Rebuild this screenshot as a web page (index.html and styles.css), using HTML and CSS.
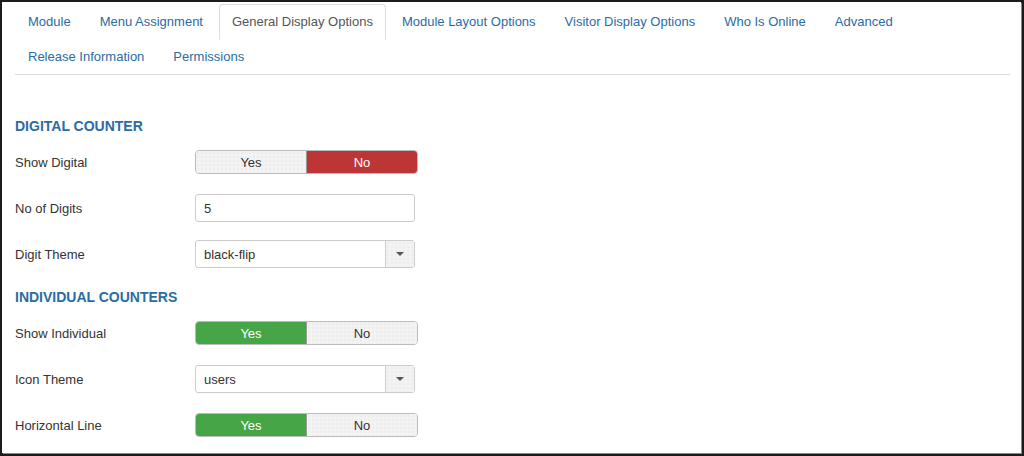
FILE: index.html
```html
<!DOCTYPE html>
<html lang="en">
<head>
  <meta charset="UTF-8">
  <meta name="viewport" content="width=device-width, initial-scale=1.0">
  <title>Module - General Display Options</title>
  <link rel="stylesheet" href="styles.css">
</head>
<body>
  <div class="panel">
    <ul class="nav-tabs">
      <li><a href="#">Module</a></li>
      <li><a href="#">Menu Assignment</a></li>
      <li class="active"><a href="#">General Display Options</a></li>
      <li><a href="#">Module Layout Options</a></li>
      <li><a href="#">Visitor Display Options</a></li>
      <li><a href="#">Who Is Online</a></li>
      <li><a href="#">Advanced</a></li>
      <li><a href="#">Release Information</a></li>
      <li><a href="#">Permissions</a></li>
    </ul>

    <form class="options">
      <h3 class="spacer-title">Digital Counter</h3>
      <div class="control-group">
        <label class="control-label">Show Digital</label>
        <div class="btn-group">
          <span class="btn">Yes</span>
          <span class="btn btn-danger">No</span>
        </div>
      </div>
      <div class="control-group">
        <label class="control-label">No of Digits</label>
        <div class="input">5</div>
      </div>
      <div class="control-group">
        <label class="control-label">Digit Theme</label>
        <div class="select">
          <span class="select-value">black-flip</span>
          <span class="select-arrow"><b></b></span>
        </div>
      </div>

      <h3 class="spacer-title">Individual Counters</h3>
      <div class="control-group">
        <label class="control-label">Show Individual</label>
        <div class="btn-group">
          <span class="btn btn-success">Yes</span>
          <span class="btn">No</span>
        </div>
      </div>
      <div class="control-group">
        <label class="control-label">Icon Theme</label>
        <div class="select">
          <span class="select-value">users</span>
          <span class="select-arrow"><b></b></span>
        </div>
      </div>
      <div class="control-group">
        <label class="control-label">Horizontal Line</label>
        <div class="btn-group">
          <span class="btn btn-success">Yes</span>
          <span class="btn">No</span>
        </div>
      </div>
    </form>
  </div>
</body>
</html>
```

FILE: styles.css
```css
html, body {
  margin: 0;
  height: 100%;
}
body {
  background-color: #1c1c1c;
  font-family: "Liberation Sans", Arial, sans-serif;
  font-size: 13px;
  color: #333;
  overflow: hidden;
}
.panel {
  margin: 2px 3px 0 2px;
  height: 451px;
  background: #fff;
  padding: 2px 11px 0 13px;
  box-sizing: border-box;
  box-shadow: 1px 1px 0 #888;
}

/* tabs */
.nav-tabs {
  list-style: none;
  margin: 0;
  padding: 0;
  display: flex;
  flex-wrap: wrap;
  border-bottom: 1px solid #ddd;
}
.nav-tabs li {
  margin: 0 3px -1px 0;
}
.nav-tabs a {
  display: block;
  padding: 8px 12px;
  line-height: 18px;
  border: 1px solid transparent;
  border-radius: 4px 4px 0 0;
  color: #2a6ca4;
  text-decoration: none;
}
.nav-tabs .active a {
  color: #555;
  background: #fff;
  border-color: #ddd #ddd transparent;
}

/* form */
.options {
  padding-top: 42px;
}
.spacer-title {
  margin: 20px 0 13px;
  font-size: 14px;
  line-height: 18px;
  font-weight: bold;
  text-transform: uppercase;
  color: #2a6ca4;
}
.options .spacer-title:first-child {
  margin-top: 0;
}
.control-group {
  display: flex;
  align-items: center;
  height: 28px;
  margin-bottom: 18px;
}
.control-label {
  width: 180px;
  color: #333;
}

.btn-group {
  display: flex;
  width: 223px;
  height: 24px;
  border: 1px solid #bbb;
  border-radius: 4px;
  overflow: hidden;
  box-sizing: border-box;
}
.btn {
  flex: 1;
  display: flex;
  align-items: center;
  justify-content: center;
  background-color: #f3f3f3;
  background-image: radial-gradient(#e2e2e2 0.6px, transparent 0.8px);
  background-size: 4px 4px;
  color: #333;
}
.btn + .btn {
  border-left: 1px solid #ccc;
}
.btn-danger {
  background: #bd3535;
  color: #fff;
}
.btn-success {
  background: #46a546;
  color: #fff;
}
.btn + .btn-danger,
.btn-success + .btn {
  border-left-color: #999;
}

.input,
.select {
  width: 220px;
  height: 28px;
  border: 1px solid #ccc;
  border-radius: 3px;
  box-sizing: border-box;
  display: flex;
  align-items: center;
  color: #333;
}
.input {
  padding: 0 8px;
}
.select-value {
  flex: 1;
  padding-left: 8px;
}
.select-arrow {
  width: 28px;
  height: 100%;
  border-left: 1px solid #ccc;
  background-color: #f3f3f3;
  background-image: radial-gradient(#e4e4e4 0.6px, transparent 0.8px);
  background-size: 4px 4px;
  display: flex;
  align-items: center;
  justify-content: center;
}
.select-arrow b {
  width: 0;
  height: 0;
  border-left: 4px solid transparent;
  border-right: 4px solid transparent;
  border-top: 4px solid #555;
}
```
